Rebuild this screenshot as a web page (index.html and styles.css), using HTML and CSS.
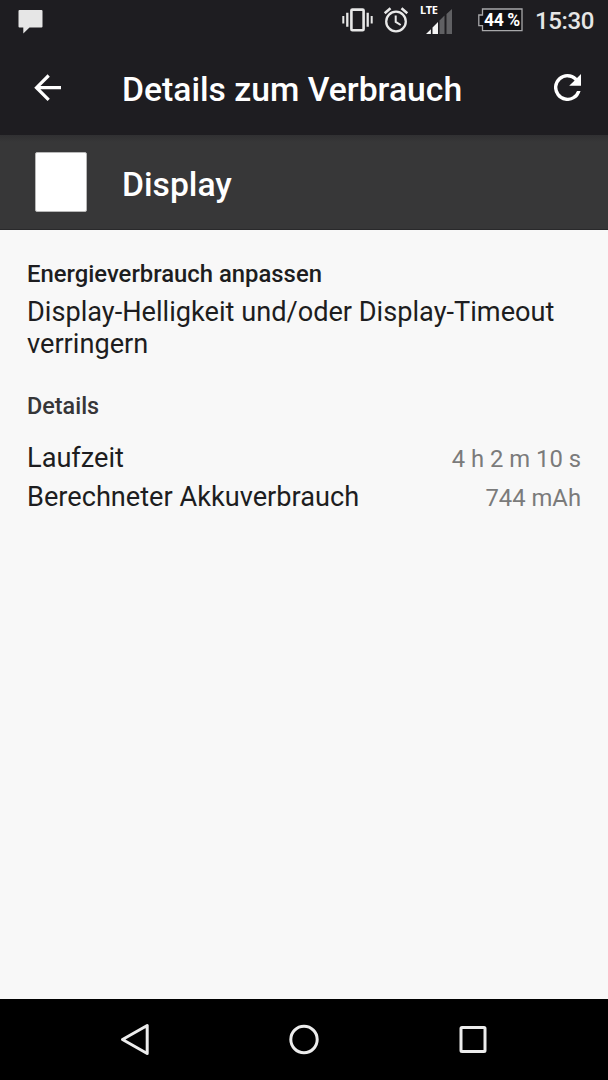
FILE: index.html
```html
<!DOCTYPE html>
<html lang="de">
<head>
<meta charset="utf-8">
<title>Details zum Verbrauch</title>
<link rel="stylesheet" href="styles.css">
</head>
<body>
<div class="screen">
  <div class="status">
    <svg class="message" width="26" height="26" viewBox="0 0 26 26"><path d="M1.500 1h22a1 1 0 0 1 1 1v15.500a1 1 0 0 1-1 1H11.500L5.300 24.500V18.500H1.500a1 1 0 0 1-1-1V2a1 1 0 0 1 1-1z" fill="#e6e6e6"/></svg>
    <svg class="vibrate" width="31" height="26" viewBox="0 0 31 26"><g fill="none" stroke="#e8e8e8"><rect x="9.400" y="2.600" width="12.200" height="20.600" rx="1" stroke-width="2.600"/><path d="M5.300 5.800v14M25.700 5.800v14" stroke-width="2.300"/><path d="M1.300 9v7.500M29.700 9v7.500" stroke-width="2"/></g></svg>
    <svg class="alarm" width="26" height="28" viewBox="0 0 26 28"><g fill="none" stroke="#e8e8e8" stroke-width="2.300"><circle cx="13" cy="15.500" r="9.800"/><path d="M12.700 9.500v6.400l5 3.100" stroke-width="2"/><path d="M1.700 7.200 7.500 2.300M24.300 7.200 18.500 2.300" stroke-width="2.600"/></g></svg>
    <div class="network">
      <span class="lte">LTE</span>
      <svg class="signal" width="26" height="26" viewBox="0 0 26 26"><path fill="#f4f4f4" d="M0 25 4.900 20.200V25zM6.500 18.500 12 13V25H6.500z"/><path fill="#606063" d="M13.500 11.500 18.500 6.500V25h-5zM20.500 5 26 0V25h-5.500z"/></svg>
    </div>
    <div class="battery">
      <svg width="46" height="24" viewBox="0 0 46 24"><path d="M4.500 1h39.500v21.700H4.500v-5H.800V7h3.700z" fill="#101014" stroke="#a8a8aa" stroke-width="1.300"/></svg>
      <span class="percent">44 %</span>
    </div>
    <span class="clock">15:30</span>
  </div>
  <div class="toolbar">
    <svg class="back" width="28" height="28" viewBox="0 0 28 28"><path d="M27 13.700H3M14.700 1.500 2.500 13.700l12.200 12.200" fill="none" stroke="#fff" stroke-width="3.200"/></svg>
    <h1 class="title">Details zum Verbrauch</h1>
    <svg class="refresh" width="27" height="27" viewBox="4 4 16 16"><path fill="#fff" d="M17.650 6.350A7.960 7.960 0 0 0 12 4a8 8 0 1 0 7.730 10h-2.080A6 6 0 1 1 12 6c1.660 0 3.140.690 4.220 1.780L13 11h7V4z"/></svg>
  </div>
  <div class="entry">
    <div class="entry-icon"></div>
    <h2 class="title">Display</h2>
  </div>
  <main class="content">
    <h3 class="heading">Energieverbrauch anpassen</h3>
    <p class="advice">Display-Helligkeit und/oder Display-Timeout verringern</p>
    <h3 class="heading details-heading">Details</h3>
    <div class="rows">
      <div class="row"><span>Laufzeit</span><span class="value">4 h 2 m 10 s</span></div>
      <div class="row"><span>Berechneter Akkuverbrauch</span><span class="value">744 mAh</span></div>
    </div>
  </main>
  <div class="nav">
    <svg width="34" height="34" viewBox="0 0 34 34"><path d="M29.200 2.500v28L4.500 16.500z" fill="none" stroke="#ececec" stroke-width="3" stroke-linejoin="round"/></svg>
    <svg width="34" height="34" viewBox="0 0 34 34"><circle cx="17" cy="16.500" r="13.200" fill="none" stroke="#ececec" stroke-width="3"/></svg>
    <svg width="34" height="34" viewBox="0 0 34 34"><rect x="5" y="4.500" width="24" height="24" rx="1" fill="none" stroke="#ececec" stroke-width="3"/></svg>
  </div>
</div>
</body>
</html>
```
FILE: styles.css
```css
* {
  box-sizing: border-box;
}

body,
h1,
h2,
h3,
p {
  margin: 0;
}

body {
  font-family: Roboto, sans-serif;
  color: #1d1d20;
}

svg {
  display: block;
  flex: none;
}

.screen {
  display: flex;
  flex-direction: column;
  width: 608px;
  height: 1080px;
  overflow: hidden;
  background: #f8f8f8;
}

.status {
  display: flex;
  align-items: flex-start;
  height: 40px;
  padding: 0 14px 0 18px;
  background: #1e1d21;
}

.message {
  margin-top: 9px;
}

.vibrate {
  margin: 7px 0 0 auto;
}

.alarm {
  margin: 6px 0 0 10px;
}

.network {
  width: 34px;
  height: 36px;
  margin-left: 11px;
  display: grid;
}

.network > * {
  grid-area: 1 / 1;
}

.lte {
  margin-top: 3px;
  font: 700 11px/13px "Noto Sans", sans-serif;
  letter-spacing: -0.300px;
  color: #fff;
}

.signal {
  margin: 9px 0 0 6px;
}

.battery {
  display: grid;
  width: 46px;
  margin: 8px 0 0 24px;
}

.battery > * {
  grid-area: 1 / 1;
}

.percent {
  padding-left: 6px;
  font-size: 17.500px;
  line-height: 25px;
  height: 24px;
  font-weight: 700;
  letter-spacing: -0.400px;
  color: #fff;
  white-space: nowrap;
}

.clock {
  width: 59px;
  margin: 6px 0 0 11px;
  font-size: 24px;
  line-height: 30px;
  font-weight: 500;
  letter-spacing: -0.400px;
  color: #e6e6e6;
}

.toolbar,
.entry {
  display: flex;
  align-items: center;
  height: 95px;
  padding: 0 27px 0 34px;
  color: #fff;
}

.toolbar {
  background: #1e1d21;
}

.entry {
  height: 94.500px;
  border-bottom: 1px solid #29292b;
  background: linear-gradient(#303032, #373738 7px);
}

.title {
  padding-top: 5px;
  font-size: 33.700px;
  line-height: 40px;
  font-weight: 500;
}

.entry .title {
  padding-top: 6px;
}

.back {
  margin-right: 60px;
}

.refresh {
  margin-left: auto;
}

.entry-icon {
  width: 52px;
  height: 60px;
  margin: 0 35px 0 1px;
  border: 1px solid #b8b8b8;
  border-radius: 2px;
  background: #fff;
}

.content {
  flex: 1;
  padding: 28px 27px 0;
}

.heading {
  font-size: 23.850px;
  line-height: 32px;
  font-weight: 500;
}

.advice {
  margin-top: 6.500px;
  font-size: 27.160px;
  line-height: 32px;
}

.details-heading {
  margin-top: 29.500px;
  font-size: 23.400px;
  color: #363638;
}

.rows {
  display: grid;
  gap: 6px;
  margin-top: 20px;
}

.row {
  display: flex;
  align-items: baseline;
  justify-content: space-between;
  font-size: 27.160px;
  line-height: 32px;
}

.value {
  font-size: 23.800px;
  color: #7b7b7b;
}

.nav {
  display: flex;
  align-items: center;
  justify-content: center;
  gap: 135px;
  height: 81px;
  background: #000;
}
```
